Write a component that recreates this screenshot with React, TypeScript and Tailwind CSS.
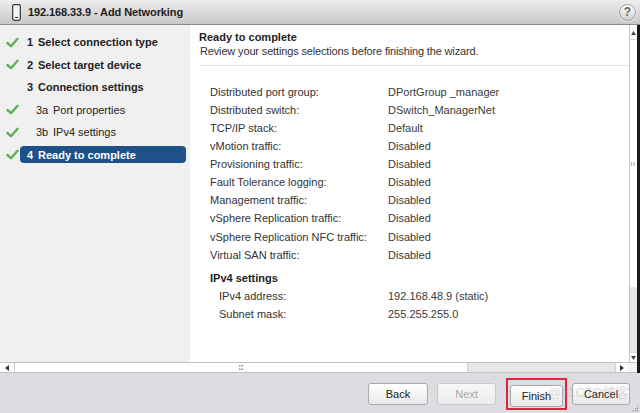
import React from "react";

function Check() {
  return (
    <svg width="13" height="11" viewBox="0 0 13 11">
      <path d="M1.5 6 L5 9.2 L11.5 1.8" fill="none" stroke="#5fae5a" strokeWidth="2.4" strokeLinecap="round" strokeLinejoin="round" />
    </svg>
  );
}

function NavItem({ check, num, label, sub, bold, selected }: { check?: boolean; num: string; label: string; sub?: boolean; bold?: boolean; selected?: boolean }) {
  return (
    <div className="h-[22.5px] flex items-center">
      <div className="w-[20px] pl-[6px] flex items-center">{check ? <Check /> : null}</div>
      {selected ? (
        <div className="w-[166px] h-[17px] rounded-[4px] bg-[#1f5189] flex items-center pl-[7px] text-white font-bold text-[11px]">
          <span className="w-[11px]">{num}</span>
          <span>{label}</span>
        </div>
      ) : (
        <div className={`flex items-center text-[11px] text-[#222] ${sub ? "pl-[16px]" : "pl-[7px]"} ${bold ? "font-bold" : ""}`}>
          <span className={sub ? "w-[17px]" : "w-[11px]"}>{num}</span>
          <span>{label}</span>
        </div>
      )}
    </div>
  );
}

function Row({ label, value, sub }: { label: string; value: string; sub?: boolean }) {
  return (
    <div className="h-[18.1px] flex items-center text-[11px] text-[#333]">
      <div className={`w-[178px] shrink-0 ${sub ? "pl-[9px]" : ""}`}>{label}</div>
      <div className="shrink-0 text-[#3a3a3a]">{value}</div>
    </div>
  );
}

function Grip({ vertical }: { vertical?: boolean }) {
  return (
    <svg width={vertical ? 8 : 6} height={vertical ? 6 : 8} viewBox={vertical ? "0 0 8 6" : "0 0 6 8"}>
      {vertical ? (
        <g fill="#8a8a8a">
          <rect x="1" y="1" width="1.5" height="1.5" />
          <rect x="4" y="1" width="1.5" height="1.5" />
          <rect x="1" y="3.5" width="1.5" height="1.5" />
          <rect x="4" y="3.5" width="1.5" height="1.5" />
        </g>
      ) : (
        <g fill="#8a8a8a">
          <rect x="1" y="1" width="1.5" height="1.5" />
          <rect x="3.5" y="1" width="1.5" height="1.5" />
          <rect x="1" y="4.5" width="1.5" height="1.5" />
          <rect x="3.5" y="4.5" width="1.5" height="1.5" />
        </g>
      )}
    </svg>
  );
}

export default function App() {
  const rows: [string, string][] = [
    ["Distributed port group:", "DPortGroup _manager"],
    ["Distributed switch:", "DSwitch_ManagerNet"],
    ["TCP/IP stack:", "Default"],
    ["vMotion traffic:", "Disabled"],
    ["Provisioning traffic:", "Disabled"],
    ["Fault Tolerance logging:", "Disabled"],
    ["Management traffic:", "Disabled"],
    ["vSphere Replication traffic:", "Disabled"],
    ["vSphere Replication NFC traffic:", "Disabled"],
    ["Virtual SAN traffic:", "Disabled"],
  ];
  return (
    <div className="w-[640px] h-[413px] flex flex-col overflow-hidden bg-white relative font-['Liberation_Sans',Arial,sans-serif]">
      {/* Title bar */}
      <div className="h-[25px] shrink-0 flex items-center border-b border-[#8c8c8c] bg-linear-to-b from-[#ededed] to-[#c8c8c8] pl-[12px] pr-[4px]">
        <svg width="9" height="17" viewBox="0 0 9 17">
          <rect x="0.7" y="0.7" width="7.6" height="15.6" rx="1.5" fill="#f4f4f4" stroke="#333" strokeWidth="1.2" />
          <line x1="3" y1="13.5" x2="6" y2="13.5" stroke="#333" strokeWidth="1" />
        </svg>
        <span className="ml-[7px] text-[11px] font-bold text-[#1e1e1e] tracking-[-0.1px]">192.168.33.9 - Add Networking</span>
        <div className="ml-auto w-[17px] h-[17px] rounded-full border border-[#9a9a9a] bg-linear-to-b from-[#ffffff] to-[#cfcfcf] flex items-center justify-center text-[12px] font-bold text-[#6a6a6a] leading-none shadow-[0_0_0_1px_#eeeeee]">?</div>
      </div>

      {/* Body + horizontal scrollbar with dark right border */}
      <div className="flex-1 min-h-0 flex flex-col border-r-[3px] border-[#1b1b1b]">
        <div className="flex-1 min-h-0 flex">
          {/* Nav */}
          <div className="w-[190px] shrink-0 bg-[#f0f0f0] pt-[6px] flex flex-col">
            <NavItem check num="1" label="Select connection type" bold />
            <NavItem check num="2" label="Select target device" bold />
            <NavItem num="3" label="Connection settings" bold />
            <NavItem check num="3a" label="Port properties" sub />
            <NavItem check num="3b" label="IPv4 settings" sub />
            <NavItem check num="4" label="Ready to complete" selected />
          </div>
          {/* Main */}
          <div className="flex-1 min-w-0 bg-white flex flex-col">
            <div className="ml-[9px] pt-[5px] pb-[7px] border-b border-[#e2e2e2]">
              <div className="h-[14px] leading-[14px] text-[11px] font-bold text-[#1e1e1e]">Ready to complete</div>
              <div className="h-[14px] leading-[14px] text-[11px] text-[#333] pl-[1px] tracking-[-0.15px]">Review your settings selections before finishing the wizard.</div>
            </div>
            <div className="pl-[20px] pt-[17px] flex flex-col">
              {rows.map(([l, v]) => (
                <Row key={l} label={l} value={v} />
              ))}
              <div className="mt-[5px] h-[18px] flex items-center text-[11px] font-bold text-[#1e1e1e]">IPv4 settings</div>
              <Row sub label="IPv4 address:" value="192.168.48.9 (static)" />
              <Row sub label="Subnet mask:" value="255.255.255.0" />
            </div>
          </div>
          {/* Vertical scrollbar */}
          <div className="w-[8px] shrink-0 border-l border-[#c6c6c6] flex flex-col bg-white">
            <div className="mt-[2px] h-[13px] border-b border-[#d8d8d8] flex items-center justify-center">
              <svg width="5" height="4" viewBox="0 0 5 4"><path d="M2.5 0 L5 4 L0 4 Z" fill="#444" /></svg>
            </div>
            <div className="flex-1 flex items-center justify-center bg-white">
              <Grip vertical />
            </div>
            <div className="h-[65px] bg-[#e6e6e6]" />
            <div className="h-[10px] flex items-center justify-center border-t border-[#d8d8d8]">
              <svg width="5" height="4" viewBox="0 0 5 4"><path d="M0 0 L5 0 L2.5 4 Z" fill="#444" /></svg>
            </div>
          </div>
        </div>
        {/* Horizontal scrollbar */}
        <div className="h-[11px] shrink-0 flex border-t border-b border-[#c2c2c2] bg-white">
          <div className="w-[15px] border-r border-[#d0d0d0] flex items-center justify-center">
            <svg width="4" height="6" viewBox="0 0 4 6"><path d="M4 0 L4 6 L0 3 Z" fill="#333" /></svg>
          </div>
          <div className="w-[452px] flex items-center justify-center">
            <Grip />
          </div>
          <div className="flex-1 bg-[#e6e6e6] border-l border-[#d0d0d0]" />
          <div className="w-[13px] border-l border-[#d0d0d0] flex items-center justify-center">
            <svg width="4" height="6" viewBox="0 0 4 6"><path d="M0 0 L4 3 L0 6 Z" fill="#333" /></svg>
          </div>
          <div className="w-[9px] bg-[#f3f3f3]" />
        </div>
      </div>

      {/* Footer */}
      <div className="h-[40px] shrink-0 bg-[#dddce3] flex items-start justify-end pt-[10px] pr-[10px] relative">
        <button className="w-[60px] h-[22px] rounded-[3px] border border-[#a9a9a9] bg-linear-to-b from-[#ffffff] to-[#e9e9e9] text-[11px] text-[#222]">Back</button>
        <button className="ml-[9px] w-[59px] h-[22px] rounded-[3px] border border-[#c9c9c9] bg-linear-to-b from-[#f7f7f7] to-[#ececec] text-[11px] text-[#a9a9a9]">Next</button>
        <div className="ml-[14px] relative">
          <button className="w-[53px] h-[22px] rounded-[3px] border border-[#a9a9a9] bg-linear-to-b from-[#ffffff] to-[#e9e9e9] text-[11px] text-[#222]">Finish</button>
          <div className="absolute left-[-4px] top-[-5px] w-[61px] h-[32px] border-[2px] border-[#d8283a] pointer-events-none" />
        </div>
        <button className="ml-[9px] w-[58px] h-[22px] rounded-[3px] border border-[#a9a9a9] bg-linear-to-b from-[#ffffff] to-[#e9e9e9] text-[11px] text-[#222]">Cancel</button>
        <div className="absolute left-[548px] top-[10px] text-[13px] text-[#a0a0a0] opacity-30 font-['Liberation_Sans','Noto_Sans_CJK_SC',sans-serif] pointer-events-none">@51CTO博客</div>
        <svg className="absolute right-[1px] bottom-[1px]" width="7" height="7" viewBox="0 0 7 7">
          <g fill="#9a9a9a">
            <rect x="5" y="1" width="1.2" height="1.2" />
            <rect x="3" y="3" width="1.2" height="1.2" />
            <rect x="5" y="3" width="1.2" height="1.2" />
            <rect x="1" y="5" width="1.2" height="1.2" />
            <rect x="3" y="5" width="1.2" height="1.2" />
            <rect x="5" y="5" width="1.2" height="1.2" />
          </g>
        </svg>
      </div>
    </div>
  );
}
